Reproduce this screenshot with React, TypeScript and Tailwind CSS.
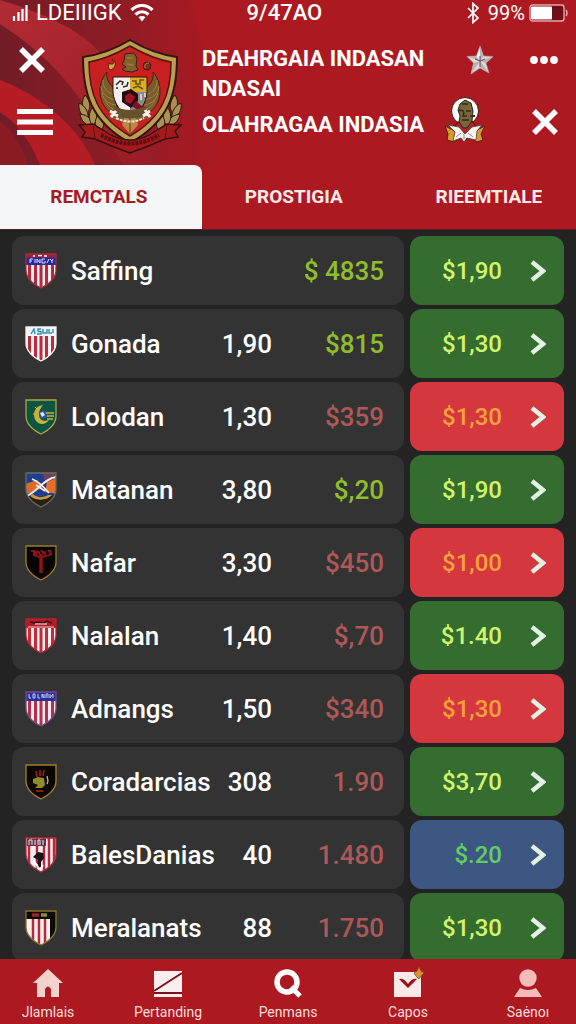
import type { ReactNode } from "react";

type Team = {
  name: string;
  odds: string;
  price: string;
  up: boolean;
  bet: string;
  tone: "green" | "red" | "blue";
  crest: ReactNode;
};

const SHIELD = "M1 1H31V17C31 26 24 31 16 35C8 31 1 26 1 17Z";

function Crest({
  id,
  base,
  edge,
  children,
}: {
  id: string;
  base: string;
  edge: string;
  children?: ReactNode;
}) {
  return (
    <svg viewBox="0 0 32 36" className="h-9 w-8 shrink-0" aria-hidden="true">
      <clipPath id={id}>
        <path d={SHIELD} />
      </clipPath>
      <g clipPath={`url(#${id})`}>
        <rect width="32" height="36" fill={base} />
        {children}
      </g>
      <path d={SHIELD} fill="none" stroke={edge} strokeWidth="1.3" />
    </svg>
  );
}

function Stripes({ color }: { color: string }) {
  return (
    <path
      d="M4.5 10V36M10.5 10V36M16 10V36M21.5 10V36M27.5 10V36"
      stroke={color}
      strokeWidth="3"
    />
  );
}

const teams: Team[] = [
  {
    name: "Saffing",
    odds: "",
    price: "$ 4835",
    up: true,
    bet: "$1,90",
    tone: "green",
    crest: (
      <Crest id="saffing" base="#f4eef2" edge="#a72c3c">
        <Stripes color="#b3283a" />
        <path d="M0 0H32V5H0Z" fill="#9c2436" />
        <path d="M0 4.500H32V12H0Z" fill="#28299a" />
        <path d="M8 3H10M13 2.500H17M19 3H22" stroke="#fff" strokeWidth="1.500" />
        <path
          d="M5 10V6H8M5 8H7M10 6V10M12 10V6L15 10V6M20 6H17V10H20V8M22 10L24 6M25 6L27 8V10M27 8L28 6"
          fill="none"
          stroke="#d9dcff"
        />
      </Crest>
    ),
  },
  {
    name: "Gonada",
    odds: "1,90",
    price: "$815",
    up: true,
    bet: "$1,30",
    tone: "green",
    crest: (
      <Crest id="gonada" base="#f7f3f4" edge="#f3f1f2">
        <Stripes color="#bb2c3c" />
        <path d="M0 0H32V9.500H0Z" fill="#f2f6f8" />
        <path
          d="M6 8L9 3L10 8M16 3H13V5.500H16V8H12M18 3V7H22V3M24 3V7H27M28 3V7"
          fill="none"
          stroke="#2f8fb5"
          strokeWidth="1.400"
        />
      </Crest>
    ),
  },
  {
    name: "Lolodan",
    odds: "1,30",
    price: "$359",
    up: false,
    bet: "$1,30",
    tone: "red",
    crest: (
      <Crest id="lolodan" base="#0d5541" edge="#a9a845">
        <path
          d="M18 6C9 7 7 16 11 22C15 27 22 25 24 21C18 23 14 21 14 15C14 11 16 9 18 6Z"
          fill="#c7b13c"
        />
        <circle cx="18.500" cy="15.500" r="4" fill="#2a56a0" />
        <path d="M15 14L18 13L20 16L17 18Z" fill="#dce8f0" />
        <path d="M21 14H29M22 17H29M22 20H28" stroke="#c7b13c" strokeWidth="1.300" />
        <path d="M12 10L10 8M10 15H8" stroke="#d7c44d" />
      </Crest>
    ),
  },
  {
    name: "Matanan",
    odds: "3,80",
    price: "$,20",
    up: true,
    bet: "$1,90",
    tone: "green",
    crest: (
      <Crest id="matanan" base="#1e3f8f" edge="#6d6a63">
        <path d="M17 0H32V9L21 12Z" fill="#73405a" />
        <path d="M0 12L12 8L18 15L6 22L0 21Z" fill="#dd6a2b" />
        <path d="M22 10L32 6V22L20 20Z" fill="#e4702c" />
        <path d="M0 22C8 27 23 27 32 21V36H0Z" fill="#27200f" />
        <path d="M5 24C11 29 22 29 27 23L23 23C18 26 12 26 8 22Z" fill="#c9973c" />
        <path
          d="M2 24C12 20 18 7 31 5M7 7C13 9 18 14 24 21M11 13L20 19"
          fill="none"
          stroke="#f2f0ee"
          strokeWidth="1.800"
        />
      </Crest>
    ),
  },
  {
    name: "Nafar",
    odds: "3,30",
    price: "$450",
    up: false,
    bet: "$1,00",
    tone: "red",
    crest: (
      <Crest id="nafar" base="#0a0505" edge="#9b7b2f">
        <path d="M16 9V28" stroke="#8f1218" strokeWidth="3.500" />
        <path
          d="M11 6V11L16 12L21 11L19 6M6 6H9V11M26 6H24L26 9L23 11M12 6L15 9M16 5L19 9"
          fill="none"
          stroke="#8f1218"
          strokeWidth="2"
        />
      </Crest>
    ),
  },
  {
    name: "Nalalan",
    odds: "1,40",
    price: "$,70",
    up: false,
    bet: "$1.40",
    tone: "green",
    crest: (
      <Crest id="nalalan" base="#f8f1f2" edge="#b52231">
        <Stripes color="#c52a38" />
        <path d="M0 0H32V10H0Z" fill="#b01a29" />
        <path d="M3 9H29" stroke="#f3c9cc" />
        <path d="M5 4L9 5L13 4L18 5L22 3L27 5" fill="none" stroke="#3c0f16" strokeWidth="1.500" />
        <path d="M10 6H22" stroke="#f5e9ea" />
      </Crest>
    ),
  },
  {
    name: "Adnangs",
    odds: "1,50",
    price: "$340",
    up: false,
    bet: "$1,30",
    tone: "red",
    crest: (
      <Crest id="adnangs" base="#f5edf1" edge="#7b4a8b">
        <Stripes color="#b2304a" />
        <path d="M0 0H32V10H0Z" fill="#27319e" />
        <path
          d="M4 3V7H6M8 3H10V7H8ZM13 3V7H15M17 7V3L19 7V3M21 7V3H23V7M25 3V7L28 3V7"
          fill="none"
          stroke="#c7ccf4"
        />
      </Crest>
    ),
  },
  {
    name: "Coradarcias",
    odds: "308",
    price: "1.90",
    up: false,
    bet: "$3,70",
    tone: "green",
    crest: (
      <Crest id="coradarcias" base="#0b0705" edge="#a67d2b">
        <path d="M12 13L11 7M15 12V6M18 12L19 6" stroke="#a81f1f" strokeWidth="1.500" />
        <path d="M8 15L13 13L19 14L20 21L17 24H10L13 21L8 19Z" fill="#8f8a2b" />
        <path d="M22 12L23 17L22 20" fill="none" stroke="#d9a39c" strokeWidth="1.300" />
        <path d="M11 27H18" stroke="#8e1d19" strokeWidth="2" />
      </Crest>
    ),
  },
  {
    name: "BalesDanias",
    odds: "40",
    price: "1.480",
    up: false,
    bet: "$.20",
    tone: "blue",
    crest: (
      <Crest id="balesdanias" base="#f5eef0" edge="#b02a3c">
        <path
          d="M4 0V36M12 0V36M19 0V36M24 0V36M29 0V36"
          stroke="#b52b3d"
          strokeWidth="2.500"
        />
        <path d="M2 2H21V9H2Z" fill="#6b3048" />
        <path d="M4 8V3H7V8M10 3V8M13 8V3H15V8M18 3V8" fill="none" stroke="#f3e9ec" />
        <path d="M13 15L18 16L19 21L16 25V31L12 29L13 23L8 20Z" fill="#191318" />
        <path d="M9 25L12 28L14 34L18 28" fill="none" stroke="#fff" strokeWidth="2" />
      </Crest>
    ),
  },
  {
    name: "Meralanats",
    odds: "88",
    price: "1.750",
    up: false,
    bet: "$1,30",
    tone: "green",
    crest: (
      <Crest id="meralanats" base="#f8f1f2" edge="#8b742c">
        <path d="M8 9V36M14 9V36M20 9V36" stroke="#b9283a" strokeWidth="2.500" />
        <path d="M0 0H32V36H25V9H0Z" fill="#0d0906" />
        <path d="M7 5H14" stroke="#a31f22" strokeWidth="3.500" />
        <path d="M16 5H22" stroke="#8a9130" strokeWidth="3.500" />
      </Crest>
    ),
  },
];

const toneClass = {
  green: "bg-[#356d31] text-[#d3f36b]",
  red: "bg-[#d5373e] text-[#f5a13c]",
  blue: "bg-[#3b5782] text-[#63cd62]",
};

const tabs = ["REMCTALS", "PROSTIGIA", "RIEEMTIALE"];

function Cross() {
  return (
    <svg viewBox="0 0 26 26" className="size-[26px]" aria-hidden="true">
      <path d="M2 2L24 24M24 2L2 24" stroke="#fff" strokeWidth="5.500" />
    </svg>
  );
}

function StatusBar() {
  return (
    <div className="grid h-[26px] grid-cols-[32%_34%_34%] items-center pl-3 pr-2 text-[22px] leading-6 text-white">
      <div className="flex items-center gap-2">
        <svg viewBox="0 0 16 16" className="size-4" aria-hidden="true">
          <path d="M2 16V11M6.500 16V7M10.500 16V4M14.500 16V0" stroke="#fff" strokeWidth="2.200" />
        </svg>
        <span>LDEIIIGK</span>
        <svg viewBox="0 0 24 18" className="h-[18px] w-6" fill="none" aria-hidden="true">
          <path
            d="M1.500 6C8 0 16 0 22.500 6M5.500 10.500C9.500 7 14.500 7 18.500 10.500"
            stroke="#fff"
            strokeWidth="3.200"
          />
          <path d="M8.500 13C10.500 11.500 13.500 11.500 15.500 13L12 17.500Z" fill="#fff" />
        </svg>
      </div>
      <span className="text-center font-medium">9/47AO</span>
      <div className="flex items-center justify-end gap-1">
        <svg viewBox="0 0 14 22" className="h-[22px] w-3.5" fill="none" aria-hidden="true">
          <path d="M2 6L12 16L7 20.500V1.500L12 6L2 16" stroke="#fff" strokeWidth="1.700" />
        </svg>
        <span className="pl-1 text-xl leading-6">99%</span>
        <svg viewBox="0 0 39 18" className="h-[18px] w-[39px]" aria-hidden="true">
          <rect x="1" y="1" width="34" height="16" rx="2.500" fill="#6d0f17" stroke="#e9a5a8" strokeWidth="1.400" />
          <rect x="2" y="2.500" width="21" height="13" rx="1" fill="#fff" />
          <path d="M37 6Q39 9 37 12" fill="none" stroke="#e9a5a8" strokeWidth="1.500" />
        </svg>
      </div>
    </div>
  );
}

function Garuda() {
  return (
    <svg viewBox="0 0 104 116" className="h-[116px] w-[104px]" role="img" aria-label="Garuda">
      {/* wheat on both sides */}
      <g stroke="#2b1711" strokeWidth="1" fill="#aa9350">
        {[0, 1].map((side) => (
          <g key={side} transform={side ? "matrix(-1 0 0 1 104 0)" : undefined}>
            <path d="M7 57C13 64 13 70 9 76C4 70 3 63 7 57Z" />
            <path d="M1 65C8 68 11 75 10 82C3 78 0 72 1 65Z" />
            <path d="M2 76C10 77 15 82 16 89C8 88 3 83 2 76Z" />
            <path d="M15 69C20 75 20 82 15 88C10 82 10 75 15 69Z" />
            <path d="M20 77C27 83 27 88 22 94C16 89 16 83 20 77Z" />
          </g>
        ))}
      </g>
      <path
        d="M52 2C67 11 83 17 99 19C99 54 92 83 52 105C12 83 5 54 5 19C21 17 37 11 52 2Z"
        fill="#bb9d50"
        stroke="#32150f"
        strokeWidth="2"
      />
      <path
        d="M52 8C66 16 81 22 93 24C93 55 85 79 52 98C19 79 11 55 11 24C23 22 38 16 52 8Z"
        fill="#c91f20"
        stroke="#4b1710"
        strokeWidth="1.500"
      />
      {/* wings */}
      <g>
        {[0, 1].map((side) => (
          <g key={side} transform={side ? "matrix(-1 0 0 1 104 0)" : undefined}>
            <path
              d="M29 34C20 44 20 60 27 69C31 75 36 77 40 75L36 50C31 46 28 41 29 34Z"
              fill="#7b5b2b"
              stroke="#3c2413"
            />
            <path
              d="M25 42C25 51 29 54 36 57M23 48C24 57 30 60 37 62M24 55C26 63 31 66 38 67M27 62C30 69 34 71 39 72"
              fill="none"
              stroke="#a0823f"
              strokeWidth="1"
            />
          </g>
        ))}
      </g>
      <path d="M34 21C38 23 39 29 33 32C29 31 31 27 31 25C35 28 37 25 34 21Z" fill="#dfa43e" stroke="#501c10" />
      <circle cx="69" cy="28" r="4" fill="#78301d" stroke="#4d170f" />
      <path d="M71 25Q66 25 67 30" fill="none" stroke="#b08245" />
      <path
        d="M47 16L56 15L59 20L58 28L60 32L54 34L47 33L44 31L48 29L44 26L46 23Z"
        fill="#80602d"
        stroke="#39210f"
      />
      <path d="M49 20H55M49 26L55 27" stroke="#9b7d3f" strokeWidth="1.500" />
      {/* tail */}
      <path d="M37 71L31 80L42 82L52 97L62 82L73 80L67 71Z" fill="#79602c" />
      <path d="M47 78L44 87L52 96L60 87L57 78Z" fill="#bd8843" />
      <path d="M52 77V97" stroke="#5e3b1c" />
      {/* quartered shield */}
      <path d="M35 39H52V54H35Z" fill="#f3f0e9" />
      <path d="M52 39H69V54H52Z" fill="#ddab27" />
      <path d="M35 54H52V78Q38 72 35 54Z" fill="#f4efee" />
      <path d="M52 54H69Q67 72 52 78Z" fill="#8a8990" />
      <path d="M35 39H69V54C68 67 62 74 52 78C42 74 36 67 35 54Z" fill="none" stroke="#24150e" />
      <path d="M38 47L42 43L45 44L44 47M45 49L49 48L50 44M38 50H40" fill="none" stroke="#2b2924" strokeWidth="1.500" />
      <path d="M54 43H58V46H62V42H66M55 50L60 48L65 51" fill="none" stroke="#6b5115" strokeWidth="1.500" />
      <path d="M63 56V62M67 55V59" stroke="#e7e3e0" strokeWidth="1.500" />
      <path d="M44 54L53 51L60 56L60 63L53 70L44 64Z" fill="#240a0d" />
      <path d="M47 58L52 55L57 59L53 66L48 64Z" fill="#a41424" />
      <path d="M58 63L66 70L62 74L54 68Z" fill="#7c1520" />
      <path d="M36 68Q52 76 68 68V77Q52 84 36 77Z" fill="#66522c" />
      <path d="M38 80Q52 87 66 80" fill="none" stroke="#eee3d7" strokeWidth="2" strokeDasharray="3 1" />
      <path d="M32 73L40 78M33 79L38 73M65 78L72 73M67 72L72 79" stroke="#fff0e9" strokeWidth="3" />
      {/* ribbon */}
      <path
        d="M1 87L15 86L25 92Q52 112 79 92L89 86L103 87L97 93L100 99L87 101Q69 109 52 115Q35 109 17 101L4 99L7 94Z"
        fill="#a4191c"
        stroke="#36100f"
        strokeWidth="1.500"
      />
      <path d="M15 87L17 101M89 87L87 101" stroke="#5b1311" />
      <path d="M23 97Q52 114 81 97" fill="none" stroke="#5b0f13" strokeWidth="4" strokeDasharray="3 1" />
    </svg>
  );
}

function Star() {
  return (
    <svg viewBox="0 0 28 30" className="h-[30px] w-7" aria-hidden="true">
      <path
        d="M14 1L17.500 11L27 11.500L20 18L23 28L14 23L5 29L7.500 18L1 11.500L10.500 11Z"
        fill="#dedadb"
        stroke="#b98d90"
        strokeWidth=".7"
      />
      <path d="M14 1V16L17.500 11ZM27 11.500L14 16L20 18ZM23 28L14 16V23ZM5 29L14 16L7.500 18ZM1 11.500L14 16L10.500 11Z" fill="#b9b1b3" />
      <path d="M14 3L10.500 11L14 16Z" fill="#f2f0f0" />
      <path d="M14 11V22M9 14L14 16L19 14" fill="none" stroke="#5d5154" />
    </svg>
  );
}

function Avatar() {
  return (
    <svg viewBox="0 0 42 48" className="h-12 w-[42px]" aria-hidden="true">
      <circle cx="21" cy="15" r="13.500" fill="#fff" stroke="#3b1b19" />
      <path d="M14 26L9 32L17 39L21 45L26 39L33 32L28 25Z" fill="#b42224" stroke="#3a1414" />
      <path d="M1 30L9 34L16 42L10 46L3 44L4 38Z" fill="#d99a2b" stroke="#4b2413" />
      <path d="M41 30L33 34L27 42L33 46L39 44L37 38Z" fill="#d99a2b" stroke="#4b2413" />
      <path d="M4 29L15 31L21 38L28 31L38 29L33 35L32 44L23 42L20 46L17 42L9 45L11 36Z" fill="#f9f4f1" stroke="#4b3636" strokeWidth=".8" />
      <path d="M20 38V43M12 41L17 37M29 41L24 37" stroke="#8e8585" />
      <path
        d="M16 8L21 4L27 7L29 15L28 25L23 32H19L15 26L16 20L14 14Z"
        fill="#77663b"
        stroke="#2d2117"
      />
      <path d="M15 14L20 15M22 15H27M20 16L19 20H23M18 24H25M18 8L24 8" fill="none" stroke="#32271a" strokeWidth="1.500" />
      <path d="M26 20H31" stroke="#492a20" strokeWidth="2" />
    </svg>
  );
}

function Header() {
  return (
    <header className="relative shrink-0 overflow-hidden bg-[#ad1921]">
      <svg
        viewBox="0 0 576 165"
        preserveAspectRatio="none"
        className="absolute left-0 top-0 h-[165px] w-full"
        aria-hidden="true"
      >
        <defs>
          <linearGradient id="shade" x1="0" x2="1">
            <stop offset="0" stopColor="#711c26" />
            <stop offset=".5" stopColor="#8d1c25" />
            <stop offset="1" stopColor="#ad1921" />
          </linearGradient>
          <linearGradient id="band" x1="0" x2="1" y1="0" y2="1">
            <stop offset="0" stopColor="#b12b34" />
            <stop offset=".6" stopColor="#a5222b" />
            <stop offset="1" stopColor="#951c25" />
          </linearGradient>
        </defs>
        <path d="M0 0H190C205 50 215 100 225 165H0Z" fill="url(#shade)" />
        <path d="M0 0C42 13 90 30 112 70L160 165H125C92 125 80 76 0 24Z" fill="url(#band)" />
        <path d="M0 80C43 96 80 129 95 165H40C30 140 18 124 0 112Z" fill="#b51d25" />
        <path d="M0 121C15 133 24 150 28 165H0Z" fill="#8b1b23" />
      </svg>

      <div className="relative">
        <StatusBar />
        <div className="flex h-[139px] items-start pl-[17px] pr-[18px]">
          <div className="flex w-[61px] shrink-0 flex-col items-start gap-9 pt-[21px]">
            <button type="button" aria-label="Close" className="pl-0.5">
              <Cross />
            </button>
            <button type="button" aria-label="Menu">
              <svg viewBox="0 0 36 26" className="h-[26px] w-9" aria-hidden="true">
                <path d="M0 2.500H36M0 13H36M0 23.500H36" stroke="#fff" strokeWidth="5" />
              </svg>
            </button>
          </div>
          <div className="shrink-0 pt-3">
            <Garuda />
          </div>
          <h1 className="min-w-0 flex-1 pl-5 pt-[18px] text-[22px] font-bold leading-[30px] text-white">
            <span className="block whitespace-nowrap">DEAHRGAIA INDASAN</span>
            <span className="block">NDASAI</span>
            <span className="block whitespace-nowrap pt-1.5">OLAHRAGAA INDASIA</span>
          </h1>
          <div className="grid shrink-0 grid-cols-[42px_28px] items-center justify-items-end gap-x-9 pt-[18px]">
            <button type="button" aria-label="Favourite" className="flex h-8 w-7 items-center">
              <Star />
            </button>
            <button type="button" aria-label="More" className="flex h-8 items-center">
              <svg viewBox="0 0 28 8" className="h-2 w-7" fill="#fff" aria-hidden="true">
                <circle cx="4" cy="4" r="3.900" />
                <circle cx="14" cy="4" r="3.900" />
                <circle cx="24" cy="4" r="3.900" />
              </svg>
            </button>
            <button type="button" aria-label="Profile" className="mr-2 mt-5">
              <Avatar />
            </button>
            <button type="button" aria-label="Dismiss" className="mt-6">
              <Cross />
            </button>
          </div>
        </div>

        <div role="tablist" className="grid h-16 grid-cols-[35%_32%_33%] text-[19px] font-bold">
          {tabs.map((tab, i) => (
            <button
              key={tab}
              type="button"
              role="tab"
              aria-selected={i === 0}
              className={`${
                i === 0 ? "rounded-tr-lg bg-[#f5f6f7] pr-1 text-[#a61b22]" : "text-[#fbe9ea]"
              } ${i === 2 ? "pl-4" : ""}`}
            >
              {tab}
            </button>
          ))}
        </div>
      </div>
    </header>
  );
}

function TeamRow({ team }: { team: Team }) {
  return (
    <li className="flex h-[69px] shrink-0 gap-1.5 text-[26px] font-medium leading-8">
      <div className="flex flex-1 items-center rounded-xl bg-[#333333] pl-[13px] pr-5">
        {team.crest}
        <span className="flex-1 pl-3.5 text-white">{team.name}</span>
        <span className="text-white">{team.odds}</span>
        <span
          className={`w-28 text-right ${
            team.up ? "text-[#90bd2c]" : "text-[#ad5856]"
          }`}
        >
          {team.price}
        </span>
      </div>
      <button
        type="button"
        className={`flex w-[154px] items-center justify-end gap-7 rounded-xl pr-[18px] text-2xl ${
          toneClass[team.tone]
        }`}
      >
        {team.bet}
        <svg viewBox="0 0 16 22" className="h-[22px] w-4" fill="none" aria-hidden="true">
          <path d="M2 2L13 11L2 20" stroke="#e2f2e4" strokeWidth="4.500" />
        </svg>
      </button>
    </li>
  );
}

const navItems = [
  {
    label: "Jlamlais",
    icon: (
      <path d="M15 1L30 15H26V29H18V21Q15 16 12 21V29H4V15H0Z" fill="#f6d2cd" />
    ),
  },
  {
    label: "Pertanding",
    icon: (
      <>
        <path d="M1 3H29V29H1Z" fill="#fbeeee" />
        <path d="M1 23L29 5M1 25H29" stroke="#7d1119" strokeWidth="2" />
      </>
    ),
  },
  {
    label: "Penmans",
    icon: (
      <>
        <circle cx="14" cy="14" r="10" fill="none" stroke="#fff" strokeWidth="5.500" />
        <path d="M18 19L27 28" stroke="#fff" strokeWidth="5" />
      </>
    ),
  },
  {
    label: "Capos",
    icon: (
      <>
        <path d="M1 4H28V29H1Z" fill="#fbe9e8" />
        <path d="M6 11Q11 10 15 16Q19 10 24 11L15 20Z" fill="#951019" />
        <path d="M26 -1L28 3L31 5L28 8L26 11L23 8L21 5L24 3Z" fill="#d9932c" stroke="#7c4617" strokeWidth=".7" />
      </>
    ),
  },
  {
    label: "Saėnoı",
    icon: (
      <>
        <circle cx="15" cy="10" r="8.700" fill="#f3bcb9" />
        <path d="M1 29L7 20Q15 24 23 20L29 29Z" fill="#f3bcb9" />
      </>
    ),
  },
];

export default function App() {
  return (
    <div className="flex h-screen flex-col bg-[#232323] font-['Roboto',sans-serif]">
      <Header />
      <main className="min-h-0 flex-1 overflow-y-auto border-t border-[#5a1f22] px-3 pt-1.5 [scrollbar-width:none]">
        <ul className="flex flex-col gap-1">
          {teams.map((team) => (
            <TeamRow key={team.name} team={team} />
          ))}
        </ul>
      </main>
      <nav className="shrink-0 overflow-hidden bg-[#ad1921] text-sm text-[#fbdcdc]">
        <div className="-mx-3 grid h-[65px] grid-cols-5">
          {navItems.map((item) => (
            <a
              key={item.label}
              href="#"
              className="flex flex-col items-center justify-end gap-1 pb-0.5"
            >
              <svg viewBox="0 0 30 30" className="size-[30px] overflow-visible" aria-hidden="true">
                {item.icon}
              </svg>
              {item.label}
            </a>
          ))}
        </div>
      </nav>
    </div>
  );
}
